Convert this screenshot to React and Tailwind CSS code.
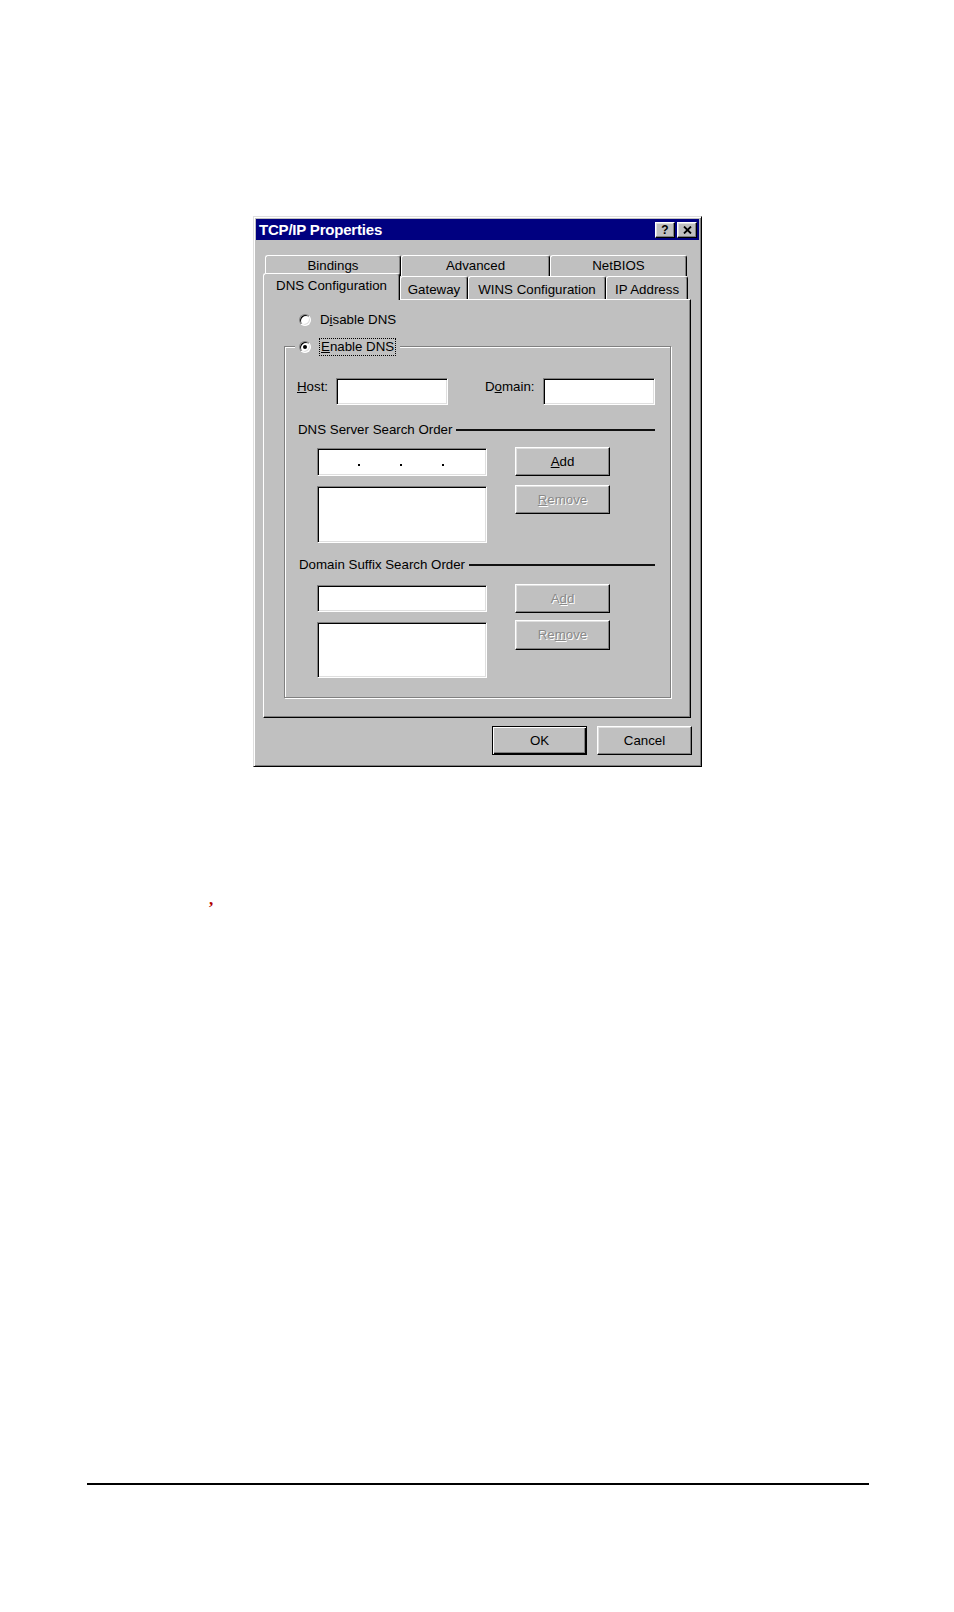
import React from "react";

const RAISED =
  "border border-t-white border-l-white border-r-black border-b-black shadow-[inset_-1px_-1px_#808080,inset_1px_1px_#dfdfdf] bg-[#c0c0c0]";
const SUNKEN =
  "border border-t-[#808080] border-l-[#808080] border-r-white border-b-white shadow-[inset_1px_1px_#000,inset_-1px_-1px_#dfdfdf] bg-white";

function Radio({ checked }) {
  return (
    <div className="w-[12px] h-[12px] rounded-full bg-white border border-t-[#808080] border-l-[#808080] border-r-white border-b-white shadow-[inset_1px_1px_#000,inset_-1px_-1px_#dfdfdf] flex items-center justify-center shrink-0">
      {checked && <div className="w-[4px] h-[4px] rounded-full bg-black" />}
    </div>
  );
}

function Button({ children, disabled, className = "" }) {
  return (
    <div
      className={`${RAISED} w-[95px] flex items-center justify-center text-[13.3px] ${
        disabled ? "text-[#8a8a8a] [text-shadow:1px_1px_0_#fff]" : "text-black"
      } ${className}`}
    >
      {children}
    </div>
  );
}

function Tab({ children, w, selected, low }) {
  if (selected) {
    return (
      <div
        className={`${w} h-[27px] mb-[-1px] relative z-10 bg-[#c0c0c0] border border-b-0 border-t-white border-l-white border-r-black rounded-t-[3px] shadow-[inset_-1px_0_#808080] flex items-center justify-center pb-[2px] text-[13.3px] shrink-0`}
      >
        {children}
      </div>
    );
  }
  return (
    <div
      className={`${w} h-full bg-[#c0c0c0] border border-b-0 border-t-white border-l-white border-r-black rounded-t-[3px] shadow-[inset_-1px_0_#808080] flex items-center justify-center text-[13.3px] shrink-0 ${
        low ? "pt-[3px]" : ""
      }`}
    >
      {children}
    </div>
  );
}

function Header({ children, ml }) {
  return (
    <div className={`flex items-center h-[16px] ${ml} mr-[15px] gap-[4px]`}>
      <span className="text-[13.3px] leading-none whitespace-nowrap">{children}</span>
      <div className="flex-1 h-[2px] bg-[#111]" />
    </div>
  );
}

export default function App() {
  return (
    <div className="w-[954px] min-h-[1612px] bg-white flex flex-col font-['Liberation_Sans',Arial,sans-serif] text-black">
      {/* Dialog */}
      <div className="ml-[253px] mt-[216px] w-[449px] h-[551px] bg-[#c0c0c0] border border-t-[#dfdfdf] border-l-[#dfdfdf] border-r-black border-b-black shadow-[inset_1px_1px_#fff,inset_-1px_-1px_#808080] p-[2px] flex flex-col">
        {/* Title bar */}
        <div className="h-[21px] bg-[#000080] flex items-center justify-between pl-[3px] pr-[2px]">
          <span className="text-white font-bold text-[15px] leading-none tracking-[-0.2px]">
            TCP/IP Properties
          </span>
          <div className="flex gap-[2px]">
            <div className={`${RAISED} w-[20px] h-[16px] flex items-center justify-center text-[12px] font-bold leading-none`}>
              ?
            </div>
            <div className={`${RAISED} w-[20px] h-[16px] flex items-center justify-center`}>
              <svg width="9" height="8" viewBox="0 0 9 8">
                <path d="M1 0.5 L8 7.5 M8 0.5 L1 7.5" stroke="#000" strokeWidth="1.8" />
              </svg>
            </div>
          </div>
        </div>

        {/* Tabs + panel */}
        <div className="mt-[15px] ml-[7px] w-[428px] flex flex-col">
          <div className="flex h-[21px] ml-[2px]">
            <Tab w="w-[136px]">Bindings</Tab>
            <Tab w="w-[149px]">Advanced</Tab>
            <Tab w="w-[137px]">NetBIOS</Tab>
          </div>
          <div className="flex items-end h-[23px]">
            <Tab w="w-[137px]" selected>
              DNS Configuration
            </Tab>
            <Tab w="w-[68px]" low>
              Gateway
            </Tab>
            <Tab w="w-[138px]" low>
              WINS Configuration
            </Tab>
            <Tab w="w-[82px]" low>
              IP Address
            </Tab>
          </div>
          <div className="w-[428px] h-[419px] bg-[#c0c0c0] border border-t-white border-l-white border-r-black border-b-black shadow-[inset_-1px_-1px_#808080] flex flex-col">
            {/* Disable DNS */}
            <div className="mt-[12px] ml-[35px] h-[16px] flex items-center gap-[9px]">
              <Radio />
              <span className="text-[13.3px] leading-none">
                D<u>i</u>sable DNS
              </span>
            </div>

            {/* Group box */}
            <div className="mt-[18px] ml-[20px] w-[387px] h-[352px] border border-[#808080] shadow-[1px_1px_0_#fff,inset_1px_1px_0_#fff] flex flex-col">
              <div className="-mt-[9px] ml-[10px] w-fit h-[18px] bg-[#c0c0c0] px-[4px] flex items-center gap-[8px]">
                <Radio checked />
                <span className="text-[13.3px] leading-none px-[1px] py-[1px] border border-dotted border-black">
                  <u>E</u>nable DNS
                </span>
              </div>

              {/* Host / Domain */}
              <div className="mt-[22px] ml-[12px] h-[27px] flex items-start">
                <span className="mt-[2px] w-[39px] text-[13.3px] leading-none">
                  <u>H</u>ost:
                </span>
                <div className={`${SUNKEN} w-[112px] h-[27px]`} />
                <span className="mt-[2px] ml-[37px] w-[58px] text-[13.3px] leading-none">
                  D<u>o</u>main:
                </span>
                <div className={`${SUNKEN} w-[112px] h-[27px]`} />
              </div>

              {/* DNS Server Search Order */}
              <div className="mt-[17px]">
                <Header ml="ml-[13px]">DNS Server Search Order</Header>
              </div>
              <div className="mt-[9px] ml-[32px] flex items-start gap-[28px]">
                <div className="pt-[1px] flex flex-col gap-[10px]">
                  <div className={`${SUNKEN} w-[170px] h-[28px] flex items-center pl-[40px] pt-[6px] gap-[40px]`}>
                    <div className="w-[2px] h-[2px] bg-black" />
                    <div className="w-[2px] h-[2px] bg-black" />
                    <div className="w-[2px] h-[2px] bg-black" />
                  </div>
                  <div className={`${SUNKEN} w-[170px] h-[57px]`} />
                </div>
                <div className="flex flex-col gap-[9px]">
                  <Button className="h-[29px]">
                    <u>A</u>dd
                  </Button>
                  <Button className="h-[29px]" disabled>
                    <u>R</u>emove
                  </Button>
                </div>
              </div>

              {/* Domain Suffix Search Order */}
              <div className="mt-[14px]">
                <Header ml="ml-[14px]">Domain Suffix Search Order</Header>
              </div>
              <div className="mt-[11px] ml-[32px] flex items-start gap-[28px]">
                <div className="pt-[1px] flex flex-col gap-[10px]">
                  <div className={`${SUNKEN} w-[170px] h-[27px]`} />
                  <div className={`${SUNKEN} w-[170px] h-[56px]`} />
                </div>
                <div className="flex flex-col gap-[7px]">
                  <Button className="h-[29px]" disabled>
                    A<u>d</u>d
                  </Button>
                  <Button className="h-[30px]" disabled>
                    Re<u>m</u>ove
                  </Button>
                </div>
              </div>
            </div>
          </div>
        </div>

        {/* OK / Cancel */}
        <div className="mt-[8px] mr-[7px] flex justify-end gap-[10px]">
          <div className="w-[95px] h-[29px] bg-[#c0c0c0] border border-black shadow-[inset_1px_1px_#fff,inset_-1px_-1px_#000,inset_-2px_-2px_#808080] flex items-center justify-center text-[13.3px]">
            OK
          </div>
          <Button className="w-[93px] h-[29px]">Cancel</Button>
        </div>
      </div>

      {/* Red comma */}
      <div className="mt-[123px] ml-[209px] h-[20px] text-[17px] leading-[20px] font-bold text-[#b00000] font-['Liberation_Serif',serif]">
        ,
      </div>

      {/* Bottom rule */}
      <div className="mt-[573px] ml-[87px] w-[782px] h-[2px] bg-black" />
    </div>
  );
}
